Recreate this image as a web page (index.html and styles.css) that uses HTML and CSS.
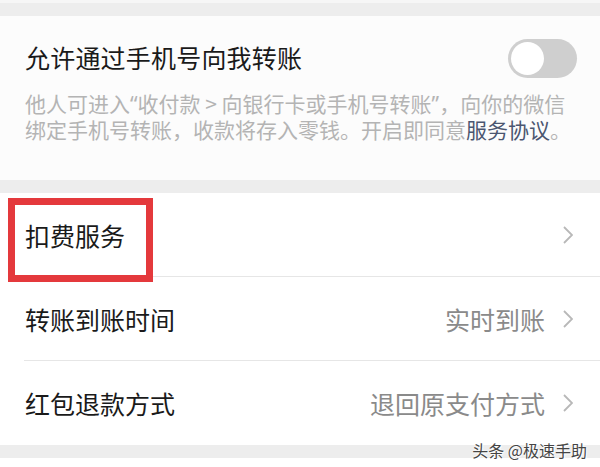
FILE: index.html
```html
<!DOCTYPE html>
<html lang="zh-CN">
<head>
<meta charset="utf-8">
<title>转账设置</title>
<link rel="stylesheet" href="styles.css">
</head>
<body>
<div class="page">
  <div class="band band-top"></div>
  <section class="card card-phone">
    <div class="title-row">
      <div class="title">允许通过手机号向我转账</div>
      <div class="switch"><span class="knob"></span></div>
    </div>
    <p class="desc"><span class="line">他人可进入<span class="q">“</span>收付款 &gt; 向银行卡或手机号转账<span class="q">”</span>，向你的微信</span><span class="line">绑定手机号转账，收款将存入零钱。开启即同意<span class="link">服务协议</span>。</span></p>
  </section>
  <div class="band band-mid"></div>
  <section class="card card-list">
    <div class="row row-first">
      <span class="label">扣费服务</span>
      <span class="right">
        <svg class="chev" viewBox="0 0 10 18" width="10" height="18"><polyline points="1,1 9,9 1,17" fill="none" stroke="#b8b8b8" stroke-width="1.8"/></svg>
      </span>
      <span class="mark"></span>
    </div>
    <div class="row">
      <span class="label">转账到账时间</span>
      <span class="right">
        <span class="value">实时到账</span>
        <svg class="chev" viewBox="0 0 10 18" width="10" height="18"><polyline points="1,1 9,9 1,17" fill="none" stroke="#b8b8b8" stroke-width="1.8"/></svg>
      </span>
    </div>
    <div class="row row-last">
      <span class="label">红包退款方式</span>
      <span class="right">
        <span class="value">退回原支付方式</span>
        <svg class="chev" viewBox="0 0 10 18" width="10" height="18"><polyline points="1,1 9,9 1,17" fill="none" stroke="#b8b8b8" stroke-width="1.8"/></svg>
      </span>
    </div>
  </section>
  <div class="band band-bottom"></div>
  <div class="tail"></div>
  <div class="watermark">头条 @极速手助</div>
</div>
</body>
</html>
```

FILE: styles.css
```css
html, body {
  margin: 0;
  padding: 0;
  background: #ffffff;
}

body {
  font-family: "Noto Sans CJK SC", "Noto Sans", sans-serif;
  color: #1a1a1a;
}

.page {
  position: relative;
  width: 600px;
  height: 467px;
  overflow: hidden;
  background: #ffffff;
}

.band {
  background: #ededed;
}

.band-top {
  height: 13px;
  border-top: 3px solid #f6f6f6;
}

.band-mid {
  height: 13px;
}

.band-bottom {
  height: 13px;
}

.tail {
  height: 9px;
  background: #ffffff;
}

.card {
  background: #fcfcfc;
}

.card-phone {
  height: 164px;
  box-sizing: border-box;
  padding: 8px 23px 0 25px;
}

.title-row {
  height: 66px;
  display: flex;
  align-items: center;
  justify-content: space-between;
}

.title {
  font-size: 25px;
  line-height: 30px;
  letter-spacing: 0.2px;
}

.switch {
  width: 69px;
  height: 39px;
  margin-top: 2px;
  border-radius: 20px;
  background: #cfcfcf;
  box-sizing: border-box;
  padding: 3px;
  display: flex;
  align-items: center;
}

.knob {
  width: 33px;
  height: 33px;
  border-radius: 50%;
  background: #ffffff;
}

.desc {
  margin: 0;
  display: flex;
  flex-direction: column;
  font-size: 21px;
  color: #b4b4b4;
  white-space: nowrap;
}

.line {
  display: block;
  height: 26px;
  line-height: 26px;
}

.q {
  font-family: "Noto Sans", "DejaVu Sans", sans-serif;
}

.link {
  color: #4b5670;
}

.card-list {
  background: #ffffff;
}

.row {
  position: relative;
  height: 84px;
  box-sizing: border-box;
  margin-left: 24px;
  padding: 0 27px 0 1px;
  display: flex;
  align-items: center;
  justify-content: space-between;
  border-bottom: 1px solid #e6e6e6;
}

.row-last {
  border-bottom: none;
}

.label {
  font-size: 25px;
  line-height: 30px;
  color: #1a1a1a;
}

.right {
  display: flex;
  align-items: center;
  gap: 18px;
}

.value {
  font-size: 25px;
  line-height: 30px;
  color: #8a8a8a;
}

.chev {
  display: block;
}

.mark {
  position: absolute;
  left: -16px;
  top: 5px;
  width: 145px;
  height: 84px;
  box-sizing: border-box;
  border: 7px solid #e4393c;
}

.watermark {
  position: absolute;
  right: 13px;
  top: 440px;
  font-size: 16px;
  line-height: 20px;
  color: #454545;
  text-shadow: 0 0 2px #ffffff, 0 0 2px #ffffff, 1px 1px 1px #ffffff;
}
```
